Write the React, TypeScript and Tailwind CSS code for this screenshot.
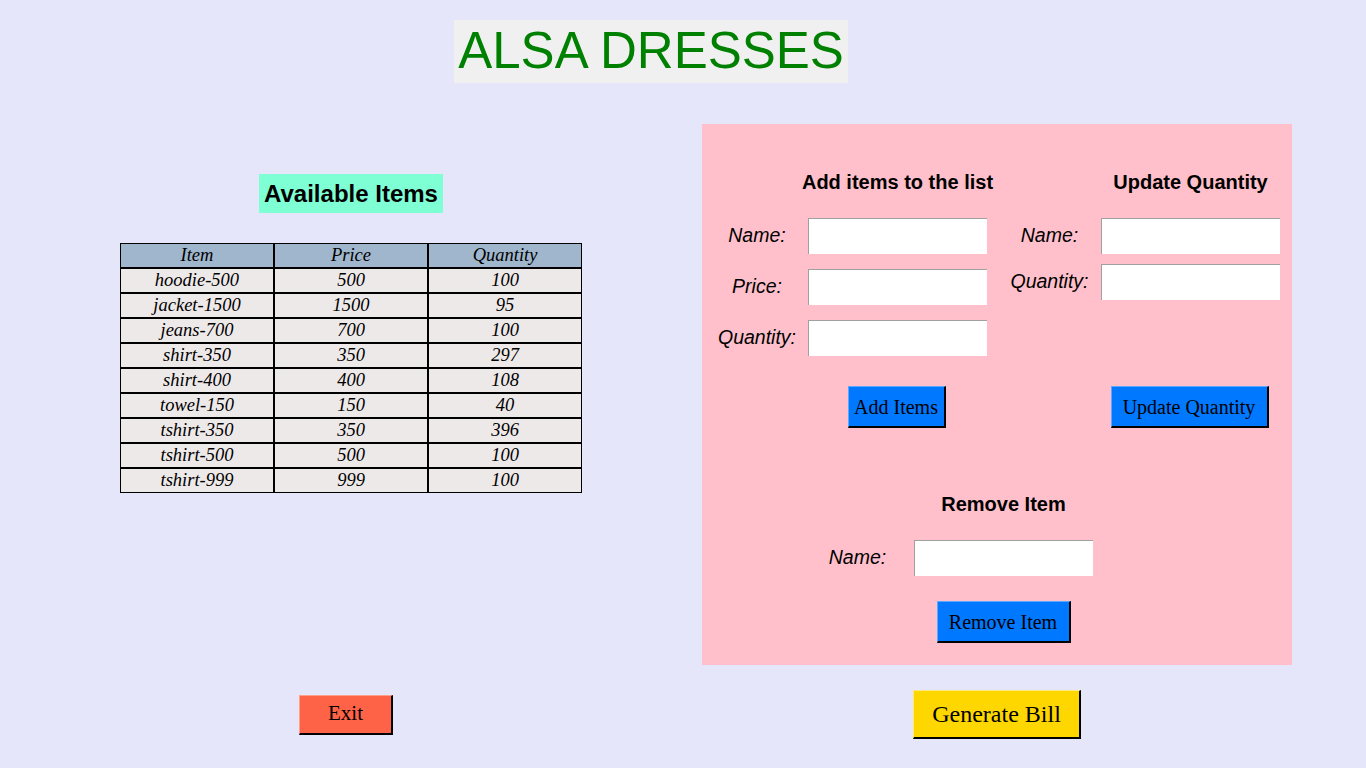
const items = [
  ['hoodie-500', '500', '100'],
  ['jacket-1500', '1500', '95'],
  ['jeans-700', '700', '100'],
  ['shirt-350', '350', '297'],
  ['shirt-400', '400', '108'],
  ['towel-150', '150', '40'],
  ['tshirt-350', '350', '396'],
  ['tshirt-500', '500', '100'],
  ['tshirt-999', '999', '100'],
]

const serif = { fontFamily: '"Liberation Serif", "Times New Roman", serif' }

function Field({ label, labelW, className = '' }: { label: string; labelW: string; className?: string }) {
  return (
    <div className={`flex items-center ${className}`}>
      <span className={`${labelW} text-center text-[19.5px] italic text-black`}>{label}</span>
      <div className="h-[36px] w-[179px] border-l border-t border-[#a0a0a0] bg-white" />
    </div>
  )
}

function RaisedButton({ children, className }: { children: string; className: string }) {
  return (
    <button
      style={serif}
      className={`flex items-center justify-center border-b-2 border-l border-r-2 border-t border-b-black border-r-black text-black ${className}`}
    >
      {children}
    </button>
  )
}

export default function App() {
  return (
    <div
      className="h-[768px] w-[1366px] overflow-hidden bg-[#e6e6fa]"
      style={{ fontFamily: '"Liberation Sans", Arial, sans-serif' }}
    >
      <div className="ml-[454px] pt-[20px]">
        <div className="flex h-[63px] w-[394px] items-center justify-center bg-[#f0f0f0] text-[51px] text-[#008000]">
          ALSA DRESSES
        </div>
      </div>

      <div className="mt-[41px] flex">
        {/* stock list */}
        <div className="flex w-[702px] flex-col items-center pt-[50px]">
          <div className="flex h-[39px] w-[184px] items-center justify-center bg-[#7fffd4] text-[24px] font-bold text-black">
            Available Items
          </div>
          <div className="mt-[30px] italic text-black" style={serif}>
            <div className="flex bg-[#9fb6cd]">
              {['Item', 'Price', 'Quantity'].map((h) => (
                <div key={h} className="flex h-[25px] w-[154px] items-center justify-center border border-black text-[18.5px]">
                  {h}
                </div>
              ))}
            </div>
            {items.map((row) => (
              <div key={row[0]} className="flex bg-[#eee9e9]">
                {row.map((c, i) => (
                  <div key={i} className="flex h-[25px] w-[154px] items-center justify-center border border-black text-[18.5px]">
                    {c}
                  </div>
                ))}
              </div>
            ))}
          </div>
        </div>

        {/* edit panel */}
        <div className="h-[541px] w-[590px] bg-[#ffc0cb] pt-[44px]">
          <div className="flex">
            <div className="w-[285px]">
              <div className="ml-[106px] flex h-[28px] w-[179px] items-center justify-center whitespace-nowrap text-[20px] font-bold">
                Add items to the list
              </div>
              <div className="mt-[22px] flex flex-col gap-[15px]">
                <Field label="Name:" labelW="w-[106px] pl-[4px]" />
                <Field label="Price:" labelW="w-[106px] pl-[4px]" />
                <Field label="Quantity:" labelW="w-[106px] pl-[4px]" />
              </div>
            </div>
            <div className="ml-[11px] w-[282px]">
              <div className="ml-[103px] flex h-[28px] w-[179px] items-center justify-center whitespace-nowrap text-[20px] font-bold">
                Update Quantity
              </div>
              <div className="mt-[22px] flex flex-col gap-[10px]">
                <Field label="Name:" labelW="w-[103px]" />
                <Field label="Quantity:" labelW="w-[103px]" />
              </div>
            </div>
          </div>

          <div className="mt-[30px] flex">
            <div className="ml-[105px] flex w-[179px] justify-center">
              <RaisedButton className="h-[42px] w-[98px] border-l-[#5aa8ff] border-t-[#5aa8ff] bg-[#0078ff] text-[20px]">
                Add Items
              </RaisedButton>
            </div>
            <div className="ml-[114px] flex w-[179px] justify-center">
              <RaisedButton className="h-[42px] w-[158px] border-l-[#5aa8ff] border-t-[#5aa8ff] bg-[#0078ff] text-[20px]">
                Update Quantity
              </RaisedButton>
            </div>
          </div>

          <div className="ml-[212px] mt-[62px] flex h-[28px] w-[179px] items-center justify-center text-[20px] font-bold">
            Remove Item
          </div>
          <Field label="Name:" labelW="ml-[104px] w-[103px] mr-[5px]" className="mt-[22px]" />
          <div className="ml-[212px] mt-[25px] flex w-[179px] justify-center">
            <RaisedButton className="h-[42px] w-[134px] border-l-[#5aa8ff] border-t-[#5aa8ff] bg-[#0078ff] text-[20px]">
              Remove Item
            </RaisedButton>
          </div>
        </div>
      </div>

      <div className="mt-[25px] flex h-[49px] items-center">
        <div className="ml-[299px]">
          <RaisedButton className="h-[40px] w-[94px] border-l-[#ffa08c] border-t-[#ffa08c] bg-[#ff6347] text-[21px]">
            Exit
          </RaisedButton>
        </div>
        <div className="ml-[520px]">
          <RaisedButton className="h-[49px] w-[168px] border-l-[#ffe97a] border-t-[#ffe97a] bg-[#ffd700] text-[24px]">
            Generate Bill
          </RaisedButton>
        </div>
      </div>
    </div>
  )
}
